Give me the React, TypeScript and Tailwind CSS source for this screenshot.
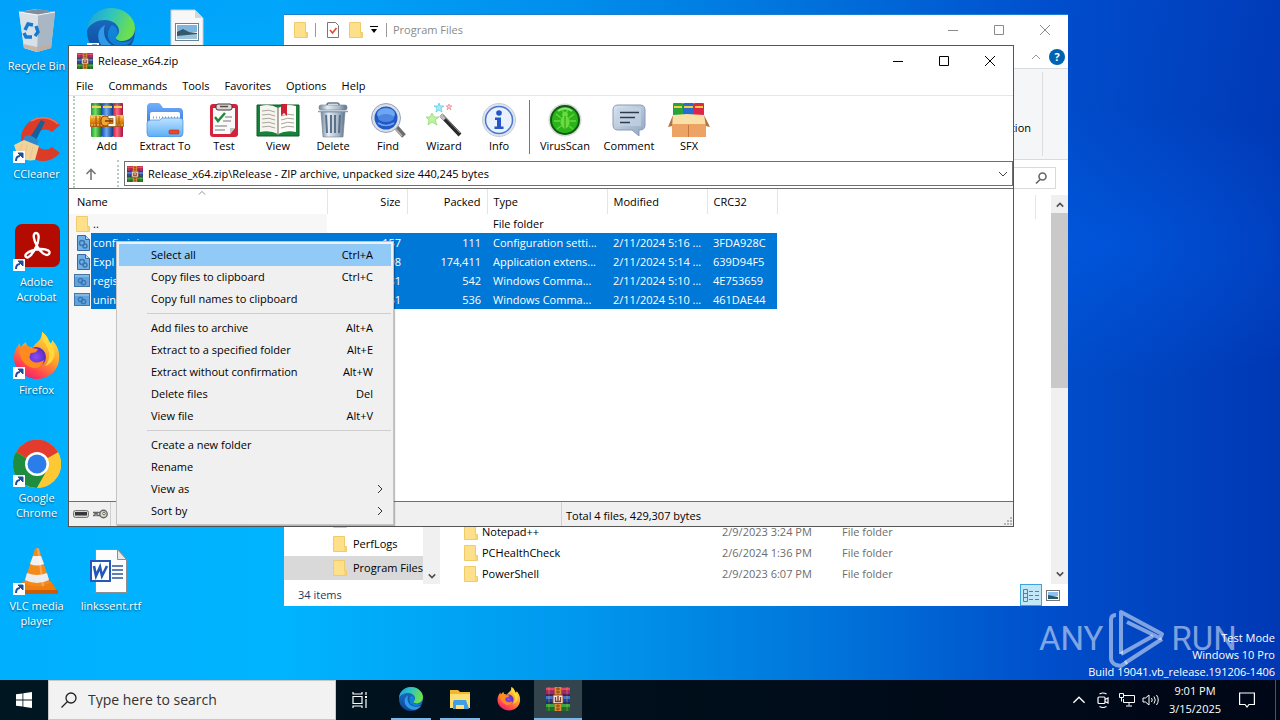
import React from 'react';

type IconProps = { className?: string };

/* ---------- Icons ---------- */

const RarIcon: React.FC<IconProps> = ({ className }) => (
  <svg viewBox="0 0 24 24" className={className} aria-hidden="true">
    <rect x="0" y="0" width="24" height="8" fill="#b5244f" />
    <rect x="0" y="1" width="24" height="2" fill="#e0486f" />
    <rect x="0" y="5" width="24" height="2" fill="#8d2a86" />
    <rect x="0" y="8" width="24" height="8" fill="#1f3f96" />
    <rect x="0" y="9" width="24" height="3" fill="#3f74d6" />
    <rect x="0" y="16" width="24" height="8" fill="#1a6b2c" />
    <rect x="0" y="17" width="24" height="3" fill="#37a744" />
    <path d="M3 0v24M21 0v24" stroke="#e7b23a" strokeWidth="1" opacity=".45" />
    <path d="M0 8h24M0 16h24" stroke="#15192e" strokeWidth="1" />
    <rect x="8.500" y="0" width="7" height="24" fill="#c9701c" />
    <path d="M10 0v24M14 0v24" stroke="#f0ae48" strokeWidth="1" />
    <path d="M10 2h4M10 5h4M10 19h4M10 22h4" stroke="#7e3e0c" />
    <rect x="7" y="8" width="10" height="8.500" rx="1" fill="#f4efe6" stroke="#8a4c22" />
    <path d="M9.500 10v4.500h5V10M12 9v5" fill="none" stroke="#8e3524" strokeWidth="1.400" />
  </svg>
);

const BookStackIcon: React.FC<IconProps> = ({ className }) => (
  <svg viewBox="0 0 34 34" className={className} aria-hidden="true">
    <defs>
      <linearGradient id="bookGreen"><stop offset="0" stopColor="#1f9b2e" /><stop offset=".4" stopColor="#6fe06a" /><stop offset="1" stopColor="#12661f" /></linearGradient>
      <linearGradient id="bookBlue"><stop offset="0" stopColor="#1d55b8" /><stop offset=".4" stopColor="#6cacf5" /><stop offset="1" stopColor="#123a86" /></linearGradient>
      <linearGradient id="bookRed"><stop offset="0" stopColor="#c81c3e" /><stop offset=".4" stopColor="#ff6a86" /><stop offset="1" stopColor="#a3153c" /></linearGradient>
      <linearGradient id="belt" x2="0" y2="1"><stop offset="0" stopColor="#ffc14e" /><stop offset=".5" stopColor="#e58a16" /><stop offset="1" stopColor="#a9560a" /></linearGradient>
    </defs>
    <rect x="1" y="0" width="11" height="34" rx="1" fill="url(#bookGreen)" />
    <rect x="12" y="0" width="11" height="34" rx="1" fill="url(#bookBlue)" />
    <rect x="23" y="0" width="10" height="34" rx="1" fill="url(#bookRed)" />
    <path d="M2 4h9M13 4h9M24 4h8" stroke="#f6d24a" strokeWidth="2" />
    <path d="M1 1h32" stroke="#3b3b54" strokeWidth="1" opacity=".5" />
    <rect x="0" y="12" width="34" height="12" rx="1" fill="url(#belt)" />
    <path d="M1 14h32M1 22h32" stroke="#ffd98a" strokeDasharray="2 1" />
    <path d="M6 13v10M10 13v10M29 13v10" stroke="#9c4e08" />
    <rect x="11" y="13" width="9" height="10" rx="4" fill="#f3a733" stroke="#8d4706" />
    <path d="M18 12.500h8v11h-8v-3h5v-5h-5z" fill="#faf6ec" stroke="#8a5a24" strokeWidth=".8" />
    <path d="M15 18h8" stroke="#7a3a06" strokeWidth="1.500" />
  </svg>
);

const ExtractIcon: React.FC<IconProps> = ({ className }) => (
  <svg viewBox="0 0 38 34" className={className} aria-hidden="true">
    <defs>
      <linearGradient id="exBack" x2="0" y2="1"><stop offset="0" stopColor="#6fb1fb" /><stop offset="1" stopColor="#2a62d8" /></linearGradient>
      <linearGradient id="exFront" x2="0" y2="1"><stop offset="0" stopColor="#bfe2ff" /><stop offset="1" stopColor="#5aaef5" /></linearGradient>
    </defs>
    <path d="M1 4q0-4 4-4h7q2 0 3 2l2 3h16q4 0 4 4v20H1z" fill="url(#exBack)" />
    <rect x="4" y="9" width="30" height="12" rx="2" fill="#fdfdfd" />
    <path d="M7 14.500h25" stroke="#8aa0ba" strokeWidth="2" strokeDasharray="1 2" />
    <path d="M1 20q0-3 4-3h9l2-2h17q4 0 4 3v12q0 4-4 4H5q-4 0-4-4z" fill="url(#exFront)" stroke="#3f8be4" strokeWidth=".7" />
    <rect x="23" y="27" width="10" height="4" rx="1" fill="#e8472c" stroke="#b32f1b" strokeWidth=".6" />
  </svg>
);

const TestIcon: React.FC<IconProps> = ({ className }) => (
  <svg viewBox="0 0 30 34" className={className} aria-hidden="true">
    <rect x="1" y="1" width="28" height="33" rx="3" fill="#d3223a" />
    <path d="M4 5h22v20l-5 6H4z" fill="#fafafa" />
    <path d="M26 25l-5 6v-6z" fill="#c4c4c4" />
    <rect x="7" y="1" width="16" height="6" rx="2" fill="#d9d9d9" stroke="#4a3336" />
    <path d="M11 3.500h8" stroke="#5b4a4a" strokeWidth="1.500" />
    <path d="M6 14l3 4 7-8" fill="none" stroke="#1f8a3a" strokeWidth="2.400" />
    <path d="M16 14h7M14 18h8M6 23h12M6 27h10" stroke="#777" strokeWidth="1.100" />
  </svg>
);

const ViewIcon: React.FC<IconProps> = ({ className }) => (
  <svg viewBox="0 0 44 34" className={className} aria-hidden="true">
    <path d="M1 2h42v31H1z" fill="#17803a" />
    <path d="M1 2h42v31H1z" fill="none" stroke="#0c5a26" />
    <path d="M4 3q10-3 18 2v26q-8-4-18-2z" fill="#f6f4ee" />
    <path d="M40 3q-10-3-18 2v26q8-4 18-2z" fill="#fdfcf8" />
    <path d="M22 5v27" stroke="#8f8c80" strokeWidth="1.400" />
    <path d="M6 8q7-2 13 1M6 12q7-2 13 1M6 16q7-2 13 1M6 20q7-2 13 1M6 24q7-2 13 1M25 13q7-3 13-1M25 17q7-3 13-1M25 21q7-3 13-1M25 25q7-3 13-1" fill="none" stroke="#a7a59c" />
    <path d="M25 1h6v12l-3-3-3 3z" fill="#cf1f33" />
  </svg>
);

const DeleteIcon: React.FC<IconProps> = ({ className }) => (
  <svg viewBox="0 0 32 36" className={className} aria-hidden="true">
    <defs>
      <linearGradient id="steel"><stop offset="0" stopColor="#72869c" /><stop offset=".3" stopColor="#e3ecf4" /><stop offset=".7" stopColor="#a9bacb" /><stop offset="1" stopColor="#5d7187" /></linearGradient>
    </defs>
    <path d="M10 3q0-2 2-2h8q2 0 2 2" fill="none" stroke="#66788c" strokeWidth="1.600" />
    <rect x="2" y="3" width="28" height="5" rx="2" fill="url(#steel)" stroke="#6c7f93" strokeWidth=".6" />
    <path d="M4 10h24l-2 25H6z" fill="url(#steel)" stroke="#6c7f93" strokeWidth=".6" />
    <path d="M9 13l1 18M14 13v18M18 13v18M23 13l-1 18" stroke="#5c7088" strokeWidth="2" />
    <path d="M1 9.500h30" stroke="#8fa3b7" strokeWidth="1.500" />
  </svg>
);

const FindIcon: React.FC<IconProps> = ({ className }) => (
  <svg viewBox="0 0 36 36" className={className} aria-hidden="true">
    <path d="M25 24l9 10" stroke="#6d6d6d" strokeWidth="5" />
    <path d="M24 25l8 9" stroke="#b5b5b5" strokeWidth="1.500" />
    <circle cx="16" cy="16" r="14.500" fill="#d8dfe9" stroke="#97a4b8" />
    <circle cx="16" cy="16" r="11.500" fill="#2259c4" />
    <ellipse cx="16" cy="12" rx="9" ry="6" fill="#6fa6f0" />
    <ellipse cx="16" cy="16" rx="8" ry="4" fill="#4c86e2" />
    <path d="M8 21q8 5 16 0" fill="none" stroke="#6da5f3" strokeWidth="1.500" />
  </svg>
);

const WizardIcon: React.FC<IconProps> = ({ className }) => (
  <svg viewBox="0 0 36 34" className={className} aria-hidden="true">
    <path d="M15 12l19 20" stroke="#2b2b2b" strokeWidth="4" />
    <path d="M15 12l4 4" stroke="#bdbdbd" strokeWidth="4" />
    <path d="M17 12l17 18" stroke="#8a8a8a" strokeWidth="1" />
    <path d="M6 10l2 4 5 0-4 3 2 5-5-3-4 3 1-5-3-3 4 0z" fill="#c0f2a0" stroke="#8fdc70" strokeWidth=".8" />
    <path d="M13 0l1 3 4 0-3 2 1 4-3-2-3 2 1-4-3-2 4 0z" fill="#a5ecf8" stroke="#62cbe6" strokeWidth=".8" />
    <path d="M23 1l1 2 2 0-2 1 1 3-2-2-2 2 1-3-2-1 2 0z" fill="#fbd0d4" stroke="#ee8f9a" strokeWidth=".8" />
  </svg>
);

const InfoIcon: React.FC<IconProps> = ({ className }) => (
  <svg viewBox="0 0 34 34" className={className} aria-hidden="true">
    <circle cx="17" cy="17" r="16.500" fill="#dfe5ee" stroke="#b9c4d4" strokeWidth=".8" />
    <circle cx="17" cy="17" r="13.500" fill="#e9f1fd" stroke="#4a74cf" strokeWidth="1.500" />
    <circle cx="17" cy="10" r="2.800" fill="#2456c6" />
    <path d="M13 14.500h6v9h2.500v2.500h-9v-2.500H15v-6.500h-2z" fill="#2456c6" />
  </svg>
);

const VirusIcon: React.FC<IconProps> = ({ className }) => (
  <svg viewBox="0 0 34 34" className={className} aria-hidden="true">
    <circle cx="17" cy="17" r="16.500" fill="#d5dad5" />
    <circle cx="17" cy="17" r="15" fill="#0b5a10" />
    <circle cx="17" cy="17" r="13" fill="#2bb31c" />
    <path d="M10 8q7-5 14 0" stroke="#8ce87a" strokeWidth="2" fill="none" />
    <ellipse cx="17" cy="19" rx="4.500" ry="6.500" fill="#6bdc40" />
    <circle cx="17" cy="11.500" r="2.800" fill="#6bdc40" />
    <path d="M8 11l5 4M26 11l-5 4M6 18h6M28 18h-6M9 26l4-3M25 26l-4-3M14 7l2 3M20 7l-2 3" stroke="#69d63c" strokeWidth="1.300" />
    <path d="M17 13v12" stroke="#2a9a1a" />
  </svg>
);

const CommentIcon: React.FC<IconProps> = ({ className }) => (
  <svg viewBox="0 0 34 34" className={className} aria-hidden="true">
    <defs>
      <linearGradient id="bubble" x2="1" y2="1"><stop offset="0" stopColor="#dbe5f1" /><stop offset="1" stopColor="#8fa5c0" /></linearGradient>
    </defs>
    <path d="M6 2h22q5 0 5 5v15q0 5-5 5h-1v6l-7-6H6q-5 0-5-5V7q0-5 5-5z" fill="url(#bubble)" stroke="#8a9bb2" />
    <path d="M5 5h24v18H5z" fill="#c4d3e4" opacity=".7" />
    <path d="M8 9.500h19M8 14.500h15M8 19.500h10" stroke="#2e3b4d" strokeWidth="1.600" />
  </svg>
);

const SfxIcon: React.FC<IconProps> = ({ className }) => (
  <svg viewBox="0 0 42 34" className={className} aria-hidden="true">
    <rect x="5" y="0" width="10" height="16" rx="1" fill="#28a33c" />
    <rect x="15" y="0" width="11" height="16" rx="1" fill="#2c6cd0" />
    <rect x="26" y="0" width="10" height="16" rx="1" fill="#dc2747" />
    <path d="M6 4h8M16 4h9M27 4h8" stroke="#f3cf3f" strokeWidth="2" />
    <path d="M4 18h34v16H4z" fill="#eda266" />
    <path d="M20.500 22v12" stroke="#c5773c" />
    <path d="M5 12l14-1 17 1 2 9H4z" fill="#f8e0a6" />
    <path d="M5 12L0 24l4-1zM36 12l6 12-4-1z" fill="#b5713f" />
  </svg>
);

const FolderIcon: React.FC<IconProps> = ({ className }) => (
  <svg viewBox="0 0 14 16" className={className} aria-hidden="true">
    <path d="M1 1h11v10h1v5H1z" fill="#f7d775" />
    <path d="M1 1h10v14H1z" fill="#ffe08a" />
    <path d="M.500 .500h11v10h2v5H.500z" fill="none" stroke="#efcb6c" />
  </svg>
);

const GearFileIcon: React.FC<IconProps> = ({ className }) => (
  <svg viewBox="0 0 14 16" className={className} aria-hidden="true">
    <path d="M1.500 .500h8l4 4v11h-12z" fill="#6fb0e6" stroke="#39699c" />
    <path d="M9.500 .500v4h4" fill="#b4d8f5" stroke="#39699c" />
    <circle cx="6" cy="8" r="2.500" fill="none" stroke="#3b74b0" strokeWidth="1.400" />
    <circle cx="9" cy="11" r="2" fill="none" stroke="#3b74b0" strokeWidth="1.400" />
  </svg>
);

const CmdFileIcon: React.FC<IconProps> = ({ className }) => (
  <svg viewBox="0 0 16 14" className={className} aria-hidden="true">
    <rect x=".5" y=".5" width="15" height="12" fill="#5fa4de" stroke="#4477a5" />
    <path d="M1 2h14" stroke="#8cc0ea" strokeWidth="1.500" />
    <circle cx="6.500" cy="6.500" r="2.200" fill="none" stroke="#3b74b0" strokeWidth="1.300" />
    <circle cx="9.500" cy="8.500" r="2.200" fill="none" stroke="#3b74b0" strokeWidth="1.300" />
  </svg>
);

const RecycleIcon: React.FC<IconProps> = ({ className }) => (
  <svg viewBox="0 0 48 48" className={className} aria-hidden="true">
    <path d="M6 4l17-3 19 3-4 36-14 4-13-4z" fill="#d8e0e8" />
    <path d="M6 4l19 3 17-3-17-3z" fill="#7d8e9e" />
    <path d="M25 7l-1 37 14-4 4-36z" fill="#a9b6c4" />
    <path d="M6 4l5 36 13 4 1-37z" fill="#d9e1e8" />
    <path d="M10 36l14 3 15-3-1 4-14 4-13-4z" fill="#c6ab9b" opacity=".8" />
    <g fill="none" stroke="#1679d3" strokeWidth="3.400">
      <path d="M12 22l3-6 5 1M23 18l2 6-3 4M19 29l-6 0-2-4" />
    </g>
    <path d="M6 4l19 3 17-3" fill="none" stroke="#f4f7fa" />
  </svg>
);

const EdgeIcon: React.FC<IconProps> = ({ className }) => (
  <svg viewBox="0 0 48 48" className={className} aria-hidden="true">
    <defs>
      <linearGradient id="edgeTop" x2="1" y2=".3"><stop offset="0" stopColor="#1b9de2" /><stop offset=".5" stopColor="#2fc3c0" /><stop offset="1" stopColor="#6be04f" /></linearGradient>
      <linearGradient id="edgeBody" x2="0" y2="1"><stop offset="0" stopColor="#1c73c9" /><stop offset="1" stopColor="#0d4797" /></linearGradient>
    </defs>
    <circle cx="24" cy="24" r="24" fill="url(#edgeBody)" />
    <path d="M0 22C1 8 12 0 24 0c14 0 24 10 24 20 0 8-6 13-13 13-4 0-7-2-6-4 2-2 3-4 3-6 0-6-6-11-14-11C9 12 2 17 0 22z" fill="url(#edgeTop)" />
    <path d="M18 17c-7 3-9 12-4 20 4 6 12 10 20 8 4-1 8-4 10-8-8 4-18 3-23-3-4-4-5-11-3-17z" fill="#2d9be9" />
    <path d="M25 17c5 2 7 7 5 11-3 3 0 6 6 6 4 0 8-1 10-4-2 6-8 9-14 8-8-1-12-7-11-13 0-3 2-6 4-8z" fill="#0e9ef5" opacity=".6" />
  </svg>
);

const PictureFileIcon: React.FC<IconProps> = ({ className }) => (
  <svg viewBox="0 0 48 48" className={className} aria-hidden="true">
    <path d="M8 2h24l8 8v38H8z" fill="#f7f7f7" stroke="#c9ced3" />
    <path d="M32 2v8h8z" fill="#cfd6dc" />
    <rect x="12.500" y="15.500" width="23" height="17" fill="#fff" stroke="#6b8296" />
    <rect x="14" y="17" width="20" height="7" fill="#7fb4df" />
    <path d="M14 24l6-3 6 3 8 1v6H14z" fill="#35596b" />
    <path d="M14 28l20-2v5H14z" fill="#9cc4dc" />
  </svg>
);

const CCleanerIcon: React.FC<IconProps> = ({ className }) => (
  <svg viewBox="0 0 48 48" className={className} aria-hidden="true">
    <path d="M47 9A22 22 0 1 0 47 37L39 31A10 10 0 1 1 39 16z" fill="#dc3b27" />
    <path d="M45 8Q33-3 18 5" fill="none" stroke="#f0705a" strokeWidth="1.500" />
    <path d="M28 4l4 2-10 20-6-3z" fill="#155f9b" />
    <path d="M12 20q5-3 14 5l-3 6-14-5z" fill="#2a8acb" />
    <path d="M1 29l10-5 15 6-4 14q-12 2-18-6z" fill="#f2d29b" />
    <path d="M9 28l-2 8M14 29l-2 12M20 31l-3 12" stroke="#e6c68c" />
  </svg>
);

const AcrobatIcon: React.FC<IconProps> = ({ className }) => (
  <svg viewBox="0 0 48 48" className={className} aria-hidden="true">
    <rect x="2" y="0" width="45" height="43" rx="7" fill="#b30b00" />
    <path d="M23 9c4 0 3 8 0 14-3 7-8 12-10 10-3-3 6-8 15-8 6 0 10 2 8 5-3 3-9-2-12-8-3-5-5-13-1-13z" fill="none" stroke="#fff" strokeWidth="2.400" />
  </svg>
);

const FirefoxIcon: React.FC<IconProps> = ({ className }) => (
  <svg viewBox="0 0 48 48" className={className} aria-hidden="true">
    <defs>
      <linearGradient id="ffBody" x1=".8" y1="0" x2=".2" y2="1"><stop offset="0" stopColor="#ffe83f" /><stop offset=".45" stopColor="#ff9a2c" /><stop offset=".8" stopColor="#ff3d55" /><stop offset="1" stopColor="#e31587" /></linearGradient>
      <radialGradient id="ffCore"><stop offset="0" stopColor="#8a4bff" /><stop offset="1" stopColor="#5a2bb8" /></radialGradient>
    </defs>
    <path d="M29 0c5 4 7 8 8 12 2-1 2-3 2-4 5 5 8 11 7 20-1 11-11 19-22 19S1 38 1 26c0-7 3-12 6-15 0 2 0 3 1 4 1-2 3-4 5-5 0 2 1 4 3 5h4c3-5 9-6 9-15z" fill="url(#ffBody)" />
    <circle cx="23" cy="25" r="10" fill="url(#ffCore)" />
    <path d="M6 16c5-3 10-2 13 0l6 1c-1 3-4 4-7 4-2 3-2 6 1 8 4 3 9 1 12-1-1 7-8 10-14 7-7-3-11-10-11-19z" fill="#ff8a1f" />
    <path d="M29 0c-1 8 5 12 7 20 1 6-1 11-4 14 8-3 11-10 9-17-2-6-5-6-6-10-1-3-3-5-6-7z" fill="#ffd93b" />
  </svg>
);

const ChromeIcon: React.FC<IconProps> = ({ className }) => (
  <svg viewBox="0 0 48 48" className={className} aria-hidden="true">
    <circle cx="24" cy="24" r="24" fill="#fcc934" />
    <path d="M24 24L3 12A24 24 0 0 1 45 12z" fill="#e33b2e" />
    <path d="M45 12H24v12z" fill="#e33b2e" />
    <path d="M3 12a24 24 0 0 0 21 36l10-18-10-6z" fill="#1e8e3e" />
    <path d="M24 48l10.500-18L45 12a24 24 0 0 1-21 36z" fill="#fcc934" />
    <circle cx="24" cy="24" r="12" fill="#fff" />
    <circle cx="24" cy="24" r="9.500" fill="#2b7de9" />
  </svg>
);

const VlcIcon: React.FC<IconProps> = ({ className }) => (
  <svg viewBox="0 0 48 48" className={className} aria-hidden="true">
    <path d="M10 33h28l6 10H4z" fill="#f07d10" />
    <path d="M4 42h41v4H4z" fill="#c95c05" />
    <path d="M22 1q2-2 4 0l11 34q-13 7-26 0z" fill="#f58a1c" />
    <path d="M20 8h8l3 8q-7 3-14 0z" fill="#f1f1f1" />
    <path d="M14 25q10 4 20 0l2 7q-12 6-24 0z" fill="#ececec" />
    <path d="M25 0l5 38" stroke="#fff" strokeWidth="2" opacity=".25" />
  </svg>
);

const WordFileIcon: React.FC<IconProps> = ({ className }) => (
  <svg viewBox="0 0 48 48" className={className} aria-hidden="true">
    <path d="M8.500 1.500h22l9 10v33h-31z" fill="#fcfcfc" stroke="#8a8f94" />
    <path d="M30.500 1.500v10h9z" fill="#e9e9e9" stroke="#8a8f94" />
    <path d="M25 18h11M25 22h11M25 26h11M25 30h11" stroke="#2b579a" strokeWidth="1.400" />
    <rect x="3" y="12" width="21" height="22" fill="#2458b8" />
    <rect x="5" y="14" width="17" height="18" fill="#fff" />
    <path d="M7 18l2 10 4-9 2 9 5-10" fill="none" stroke="#2458b8" strokeWidth="2.600" />
  </svg>
);

const ExplorerIcon: React.FC<IconProps> = ({ className }) => (
  <svg viewBox="0 0 24 24" className={className} aria-hidden="true">
    <path d="M2 3h8l2 2h10v16H2z" fill="#f3b72f" />
    <path d="M2 7h20v14H2z" fill="#ffdf74" />
    <path d="M6 13h12l3 9h-5v-4H8v4H5v-7z" fill="#3f9fe4" />
    <path d="M8 18h8v4H8z" fill="#ffdf74" />
  </svg>
);

const ShortcutBadge = () => (
  <svg viewBox="0 0 12 12" className="absolute bottom-px left-0 h-3 w-3" aria-hidden="true">
    <rect width="12" height="12" fill="#fff" />
    <path d="M3 10q0-5 4-5" fill="none" stroke="#1d4f9c" strokeWidth="2" />
    <path d="M5 2h5v5z" fill="#1d4f9c" stroke="#1d4f9c" />
  </svg>
);

const Chevron: React.FC<{ path: string; className?: string }> = ({ path, className }) => (
  <svg viewBox="0 0 10 10" className={className} fill="none" stroke="currentColor" aria-hidden="true">
    <path d={path} />
  </svg>
);

const UP = 'M1 7l4-4 4 4';
const DOWN = 'M1 3l4 4 4-4';
const RIGHT = 'M3 1l4 4-4 4';

/* ---------- Data ---------- */

const desktopItems = [
  { label: 'Recycle Bin', icon: <RecycleIcon className="h-12 w-12" />, place: 'col-start-1 row-start-1', shortcut: false },
  { label: 'CCleaner', icon: <CCleanerIcon className="h-12 w-12" />, place: 'col-start-1 row-start-2', shortcut: true },
  { label: 'Adobe Acrobat', icon: <AcrobatIcon className="h-12 w-12" />, place: 'col-start-1 row-start-3', shortcut: true },
  { label: 'Firefox', icon: <FirefoxIcon className="h-12 w-12" />, place: 'col-start-1 row-start-4', shortcut: true },
  { label: 'Google Chrome', icon: <ChromeIcon className="h-12 w-12" />, place: 'col-start-1 row-start-5', shortcut: true },
  { label: 'VLC media player', icon: <VlcIcon className="h-12 w-12" />, place: 'col-start-1 row-start-6', shortcut: true },
  { label: '', icon: <EdgeIcon className="h-12 w-12" />, place: 'col-start-2 row-start-1', shortcut: true },
  { label: 'linkssent.rtf', icon: <WordFileIcon className="h-12 w-12" />, place: 'col-start-2 row-start-6', shortcut: false },
  { label: '', icon: <PictureFileIcon className="h-12 w-12" />, place: 'col-start-3 row-start-1', shortcut: false },
];

const toolbar = [
  { label: 'Add', width: 'w-[54px]', icon: <BookStackIcon className="h-[34px] w-[34px]" /> },
  { label: 'Extract To', width: 'w-[62px]', icon: <ExtractIcon className="h-[34px] w-[38px]" /> },
  { label: 'Test', width: 'w-[56px]', icon: <TestIcon className="h-[34px] w-[30px]" /> },
  { label: 'View', width: 'w-[52px]', icon: <ViewIcon className="h-[34px] w-[44px]" /> },
  { label: 'Delete', width: 'w-[58px]', icon: <DeleteIcon className="h-9 w-8" /> },
  { label: 'Find', width: 'w-[52px]', icon: <FindIcon className="h-9 w-9" /> },
  { label: 'Wizard', width: 'w-[60px]', icon: <WizardIcon className="h-[34px] w-9" /> },
  { label: 'Info', width: 'w-[50px]', icon: <InfoIcon className="h-[34px] w-[34px]" /> },
];

const toolbarExtra = [
  { label: 'VirusScan', width: 'w-[60px]', icon: <VirusIcon className="h-[34px] w-[34px]" /> },
  { label: 'Comment', width: 'w-[68px]', icon: <CommentIcon className="h-[34px] w-[34px]" /> },
  { label: 'SFX', width: 'w-[52px]', icon: <SfxIcon className="h-[34px] w-[42px]" /> },
];

const archiveRows = [
  { name: 'config.ini', size: '157', packed: '111', type: 'Configuration setti...', modified: '2/11/2024 5:16 ...', crc: '3FDA928C', cmd: false },
  { name: 'Expl', size: '98', packed: '174,411', type: 'Application extens...', modified: '2/11/2024 5:14 ...', crc: '639D94F5', cmd: false },
  { name: 'regis', size: '81', packed: '542', type: 'Windows Comma...', modified: '2/11/2024 5:10 ...', crc: '4E753659', cmd: true },
  { name: 'unin', size: '61', packed: '536', type: 'Windows Comma...', modified: '2/11/2024 5:10 ...', crc: '461DAE44', cmd: true },
];

const menuGroups = [
  [
    { label: 'Select all', keys: 'Ctrl+A', active: true },
    { label: 'Copy files to clipboard', keys: 'Ctrl+C' },
    { label: 'Copy full names to clipboard' },
  ],
  [
    { label: 'Add files to archive', keys: 'Alt+A' },
    { label: 'Extract to a specified folder', keys: 'Alt+E' },
    { label: 'Extract without confirmation', keys: 'Alt+W' },
    { label: 'Delete files', keys: 'Del' },
    { label: 'View file', keys: 'Alt+V' },
  ],
  [
    { label: 'Create a new folder' },
    { label: 'Rename' },
    { label: 'View as', submenu: true },
    { label: 'Sort by', submenu: true },
  ],
] as { label: string; keys?: string; active?: boolean; submenu?: boolean }[][];

const folders = [
  { name: 'Notepad++', date: '2/9/2023 3:24 PM' },
  { name: 'PCHealthCheck', date: '2/6/2024 1:36 PM' },
  { name: 'PowerShell', date: '2/9/2023 6:07 PM' },
];

/* ---------- Pieces ---------- */

const WindowButtons: React.FC<{ className?: string }> = ({ className }) => (
  <div className={`ml-auto flex self-stretch ${className ?? ''}`}>
    {[
      { label: 'Minimize', d: 'M0 5.500h10' },
      { label: 'Maximize', d: 'M.5 .5h9v9h-9z' },
      { label: 'Close', d: 'M0 0l10 10M10 0L0 10' },
    ].map(b => (
      <button key={b.label} aria-label={b.label} className="flex w-[46px] items-center justify-center">
        <svg viewBox="0 0 10 10" className="h-2.5 w-2.5" fill="none" stroke="currentColor">
          <path d={b.d} />
        </svg>
      </button>
    ))}
  </div>
);

const ToolButton: React.FC<{ label: string; width: string; icon: React.ReactNode }> = ({ label, width, icon }) => (
  <button className={`flex flex-col items-center pt-0.5 ${width}`}>
    <span className="flex h-9 items-center">{icon}</span>
    <span className="leading-4 whitespace-nowrap">{label}</span>
  </button>
);

const DesktopIcons = () => (
  <div className="grid w-[225px] grid-cols-[73px_76px_76px] grid-rows-[repeat(6,108px)]">
    {desktopItems.map((item, i) => (
      <a key={i} href="#" aria-label={item.label || 'Desktop item'} className={`flex flex-col items-center pt-2 ${item.place}`}>
        <span className="relative block h-12 w-12">
          {item.icon}
          {item.shortcut && <ShortcutBadge />}
        </span>
        <span className="mt-0.5 max-w-[72px] text-center leading-[15px] text-white [text-shadow:0_1px_2px_rgba(0,0,0,0.6)]">
          {item.label}
        </span>
      </a>
    ))}
  </div>
);

const ExplorerWindow = () => (
  <section className="absolute top-[14px] left-[284px] flex h-[592px] w-[784px] flex-col overflow-hidden border-t border-[#1a7fd0] bg-white">
    <header className="flex h-[30px] shrink-0 items-center pl-2.5 text-[#8a8a8a]">
      <FolderIcon className="h-4 w-3.5" />
      <span className="ml-[7px] h-3.5 w-px bg-[#9a9a9a]" />
      <svg viewBox="0 0 12 16" className="ml-[11px] h-4 w-3">
        <path d="M.5 .5h8l3 3v12H.5z" fill="#fff" stroke="#777" />
        <path d="M3 8l2.500 3 4-5" fill="none" stroke="#e0492f" strokeWidth="1.600" />
      </svg>
      <FolderIcon className="ml-2.5 h-4 w-3.5" />
      <svg viewBox="0 0 8 8" className="ml-[7px] h-2 w-2">
        <path d="M0 .500h8" stroke="#000" />
        <path d="M1 3h6L4 7z" />
      </svg>
      <span className="ml-2 h-3.5 w-px bg-[#9a9a9a]" />
      <h2 className="ml-1.5">Program Files</h2>
      <WindowButtons />
    </header>

    <div className="flex h-[23px] shrink-0 items-center justify-end gap-2 pr-[3px]">
      <Chevron path={UP} className="h-2.5 w-2.5 text-[#999]" />
      <button aria-label="Help" className="flex h-4 w-4 items-center justify-center rounded-full bg-[#0063b1] font-bold text-white">?</button>
    </div>

    {/* Ribbon */}
    <div className="flex h-[92px] shrink-0 justify-end border-y border-[#dadbdc] bg-[#f5f6f7] py-[3px] pr-[25px]">
      <div className="flex items-center border-r border-[#dcdddf] pt-7 pr-[11px] leading-4">
        <span>tion</span>
      </div>
    </div>

    <div className="flex h-[35px] shrink-0 items-center justify-end pr-3">
      <label className="flex h-[22px] w-[200px] items-center border border-[#d9d9d9] pr-2">
        <input aria-label="Search Program Files" className="min-w-0 flex-1 outline-none" />
        <svg viewBox="0 0 12 12" className="h-3 w-3" fill="none" stroke="#666" strokeWidth="1.600">
          <circle cx="7.500" cy="4.500" r="3.500" />
          <path d="M5 7.500L1 11.500" />
        </svg>
      </label>
    </div>

    <div className="flex min-h-0 flex-1">
      <nav className="flex w-[139px] flex-col justify-end overflow-hidden pb-1">
        <div className="flex h-6 shrink-0 items-center pl-[49px]"><FolderIcon className="h-4 w-3.5" /></div>
        <a href="#" className="flex h-6 shrink-0 items-center gap-1.5 pl-[49px]">
          <FolderIcon className="h-4 w-3.5 shrink-0" /> PerfLogs
        </a>
        <a href="#" className="flex h-6 shrink-0 items-center gap-1.5 bg-[#d9d9d9] pl-[49px] whitespace-nowrap">
          <FolderIcon className="h-4 w-3.5 shrink-0" /> Program Files
        </a>
      </nav>
      <div className="flex w-[17px] items-end justify-center bg-[#f0f0f0] pb-1">
        <Chevron path={DOWN} className="h-2 w-2 stroke-2 text-[#505050]" />
      </div>
      <div className="flex min-w-0 flex-1 flex-col">
        <div className="h-6 w-[596px] border-r border-[#e5e5e5]" />
        <table className="mt-auto w-full table-fixed border-collapse">
          <tbody>
            {folders.map(f => (
              <tr key={f.name} className="h-[21px]">
                <td className="w-[282px] p-0 pl-6">
                  <span className="flex items-center gap-1"><FolderIcon className="h-4 w-3.5" />{f.name}</span>
                </td>
                <td className="w-[120px] p-0 text-[#6d6d6d]">{f.date}</td>
                <td className="p-0 text-[#6d6d6d]">File folder</td>
              </tr>
            ))}
          </tbody>
        </table>
      </div>
      <div className="flex w-[17px] flex-col items-center bg-[#f0f0f0]">
        <Chevron path={UP} className="mt-1.5 mb-1 h-2 w-2 stroke-2 text-[#505050]" />
        <div className="h-[175px] w-full bg-[#c9c9c9]" />
        <Chevron path={DOWN} className="mt-auto mb-1.5 h-2 w-2 stroke-2 text-[#505050]" />
      </div>
    </div>

    <footer className="flex h-[22px] shrink-0 items-center pl-3.5 text-[#1e395b]">
      <span>34 items</span>
      <button aria-label="Details view" className="ml-auto flex h-full w-[22px] items-center justify-center border border-[#3ca5dc] bg-[#c4e7f8]">
        <svg viewBox="0 0 16 13" className="h-[13px] w-4" fill="none" stroke="#777">
          <path d="M.5 .5h4v12h-4zM.5 4.500h4M.5 8.500h4M6 2.500h4M12 2.500h4M6 6.500h4M12 6.500h4M6 10.500h4M12 10.500h4" />
        </svg>
      </button>
      <button aria-label="Thumbnail view" className="flex w-[26px] justify-center pr-1">
        <svg viewBox="0 0 14 11" className="h-[11px] w-3.5">
          <rect x=".5" y=".5" width="13" height="10" fill="#fff" stroke="#777" />
          <path d="M2 2h10v4H2z" fill="#8cc3ee" />
          <path d="M2 5l10 2v2H2z" fill="#245a70" />
        </svg>
      </button>
    </footer>
  </section>
);

const ArchiveTable = () => (
  <div className="min-h-0 flex-1 overflow-hidden border-y border-[#707070] bg-[linear-gradient(to_right,#f7f7f7_258px,#fff_258px)]">
    <div className="bg-white">
      <table className="w-[708px] table-fixed border-collapse">
        <thead>
          <tr className="h-[25px]">
            <th className="relative w-[258px] border-r border-[#e5e5e5] p-0 pl-2 text-left font-normal">
              Name
              <Chevron path={UP} className="absolute top-0 left-1/2 h-2 w-2 text-[#777]" />
            </th>
            <th className="w-[80px] border-r border-[#e5e5e5] p-0 pr-1.5 text-right font-normal">Size</th>
            <th className="w-[80px] border-r border-[#e5e5e5] p-0 pr-1.5 text-right font-normal">Packed</th>
            <th className="w-[120px] border-r border-[#e5e5e5] p-0 pl-1.5 text-left font-normal">Type</th>
            <th className="w-[100px] border-r border-[#e5e5e5] p-0 pl-1.5 text-left font-normal">Modified</th>
            <th className="w-[70px] border-r border-[#e5e5e5] p-0 pl-1.5 text-left font-normal">CRC32</th>
          </tr>
        </thead>
        <tbody>
          <tr className="h-[19px]">
            <td className="bg-[#f7f7f7] p-0 pl-[7px]">
              <span className="flex items-center gap-[3px]"><FolderIcon className="h-4 w-3.5" />..</span>
            </td>
            <td />
            <td />
            <td className="p-0 pl-1.5">File folder</td>
            <td />
            <td />
          </tr>
          {archiveRows.map(r => (
            <tr key={r.name} className="h-[19px] text-white">
              <td className="bg-[#f7f7f7] p-0">
                <div className="flex h-[19px] items-center">
                  <span className="flex w-[22px] shrink-0 justify-end pr-px">
                    {r.cmd ? <CmdFileIcon className="h-3.5 w-4" /> : <GearFileIcon className="h-4 w-3.5" />}
                  </span>
                  <span className="flex h-full flex-1 items-center bg-[#0078d7] pl-0.5">{r.name}</span>
                </div>
              </td>
              <td className="bg-[#0078d7] p-0 pr-1.5 text-right">{r.size}</td>
              <td className="bg-[#0078d7] p-0 pr-1.5 text-right">{r.packed}</td>
              <td className="bg-[#0078d7] p-0 pl-1.5 whitespace-nowrap">{r.type}</td>
              <td className="bg-[#0078d7] p-0 pl-1.5 whitespace-nowrap">{r.modified}</td>
              <td className="bg-[#0078d7] p-0 pl-1.5">{r.crc}</td>
            </tr>
          ))}
        </tbody>
      </table>
    </div>
  </div>
);

const ArchiveWindow = () => (
  <section className="absolute top-[45px] left-[68px] flex h-[482px] w-[946px] flex-col border border-[#555] bg-white">
    <header className="flex h-[29px] shrink-0 items-center pl-2">
      <RarIcon className="h-4 w-4" />
      <h1 className="ml-[5px]">Release_x64.zip</h1>
      <WindowButtons className="text-black" />
    </header>

    <nav className="flex h-[21px] shrink-0 items-center gap-[15px] border-b border-[#e6e6e6] pt-px pl-[7px]">
      {['File', 'Commands', 'Tools', 'Favorites', 'Options', 'Help'].map(m => (
        <button key={m}>{m}</button>
      ))}
    </nav>

    <div className="flex h-[92px] shrink-0 flex-col pl-1">
      <div className="flex min-h-0 flex-1 flex-col border-l-2 border-dotted border-[#b5cdbd]">
        <div className="flex h-16 items-start pt-1 pl-[5px]">
          {toolbar.map(t => <ToolButton key={t.label} {...t} />)}
          <span className="mr-[5px] ml-[5px] h-[54px] w-px bg-[#777]" />
          {toolbarExtra.map(t => <ToolButton key={t.label} {...t} />)}
        </div>
        <div className="flex h-[27px] items-center">
          <button aria-label="Up one level" className="flex h-full w-[44px] items-center border-r-2 border-dotted border-[#b5cdbd] pl-2.5">
            <svg viewBox="0 0 12 12" className="h-3 w-3" fill="none" stroke="#777" strokeWidth="1.600">
              <path d="M6 12V1.500M1.500 6L6 1.500 10.500 6" />
            </svg>
          </button>
          <label className="ml-[5px] flex h-[25px] flex-1 items-center border border-[#707070] pr-1 pl-0.5">
            <RarIcon className="h-4 w-4" />
            <select aria-label="Archive path" className="h-full flex-1 appearance-none bg-white pl-[5px] outline-none">
              <option>Release_x64.zip\Release - ZIP archive, unpacked size 440,245 bytes</option>
            </select>
            <Chevron path={DOWN} className="h-2.5 w-2.5 text-[#444]" />
          </label>
        </div>
      </div>
    </div>

    <ArchiveTable />

    <footer className="flex h-6 shrink-0 items-center bg-[#f0f0f0] pl-1">
      <svg viewBox="0 0 16 8" className="h-2 w-4">
        <rect x=".5" y=".5" width="15" height="7" rx="2" fill="#d4d4cc" stroke="#77776f" />
        <rect x="2" y="2" width="12" height="3.500" fill="#34383c" />
      </svg>
      <svg viewBox="0 0 16 10" className="ml-[3px] h-2.5 w-4" fill="none" stroke="#66665f">
        <path d="M1 3.500h8M1 6.500h2v-2h2v2h4" strokeWidth="1.400" />
        <circle cx="11.500" cy="5" r="3.700" fill="#dcdcd4" strokeWidth="1.400" />
        <circle cx="12" cy="4.500" r="1.300" fill="#fff" />
      </svg>
      <span className="ml-0.5 h-full w-px bg-[#d0d0d0]" />
      <span className="ml-[450px] h-full w-px bg-[#d0d0d0]" />
      <span className="ml-1 pt-1">Total 4 files, 429,307 bytes</span>
      <svg viewBox="0 0 9 9" className="ml-auto h-[9px] w-[9px] self-end" fill="#b4b4b4">
        <path d="M6 0h2v2H6zM6 3h2v2H6zM6 6h2v2H6zM3 3h2v2H3zM3 6h2v2H3zM0 6h2v2H0z" />
      </svg>
    </footer>
  </section>
);

const ContextMenu = () => (
  <div role="menu" className="absolute top-[241px] left-[116px] w-[278px] border border-[#c4c4c4] bg-[#f0f0f0] p-0.5 shadow-[1px_1px_1px_rgba(0,0,0,0.25)]">
    {menuGroups.map((group, i) => (
      <React.Fragment key={i}>
        {i > 0 && <div className="my-[3px] ml-7 h-px bg-[#cfcfcf]" />}
        {group.map(item => (
          <button
            key={item.label}
            role="menuitem"
            className={`flex h-[22px] w-full items-center justify-between pl-8 ${item.submenu ? 'pr-1.5' : 'pr-[18px]'} ${item.active ? 'bg-[#91c9f7]' : ''}`}
          >
            <span>{item.label}</span>
            {item.keys && <span>{item.keys}</span>}
            {item.submenu && <Chevron path={RIGHT} className="h-2.5 w-2.5 text-[#333]" />}
          </button>
        ))}
      </React.Fragment>
    ))}
  </div>
);

const Watermark = () => (
  <div className="absolute right-[5px] bottom-0 h-[74px] w-[236px]">
    <div className="flex h-16 items-center gap-1.5 font-['Roboto',sans-serif] text-[33px] leading-none text-white/50">
      <span>ANY</span>
      <svg viewBox="0 0 56 60" className="h-[60px] w-14" fill="none" stroke="currentColor" strokeWidth="4">
        <path d="M7 7q-5 0-5 5v38q0 5 5 7l5 1 6-4" />
        <path d="M12 46V4l41 22-2 4-33-16" strokeLinejoin="round" />
        <path d="M12 46l32-18M16 55l37-24" />
      </svg>
      <span>RUN</span>
    </div>
    <div className="absolute right-0 bottom-0 text-right leading-[17px] whitespace-nowrap text-white">
      <p>Test Mode</p>
      <p>Windows 10 Pro</p>
      <p>Build 19041.vb_release.191206-1406</p>
    </div>
  </div>
);

const Taskbar = () => (
  <footer className="flex h-10 shrink-0 items-stretch bg-[linear-gradient(to_right,#001722,#000d1a_60%,#000716)] text-white">
    <button aria-label="Start" className="flex w-12 items-center justify-center">
      <svg viewBox="0 0 16 16" className="h-4 w-4" fill="#fff">
        <path d="M0 2.300L6.500 1.400V7.600H0zM7.300 1.300L16 0v7.600H7.300zM0 8.400h6.500v6.200L0 13.700zM7.300 8.400H16V16l-8.700-1.300z" />
      </svg>
    </button>
    <label className="flex w-[288px] items-center border border-[#c8c8c8] bg-[#f2f2f2] pl-3">
      <svg viewBox="0 0 16 16" className="h-4 w-4 shrink-0" fill="none" stroke="#222" strokeWidth="1.300">
        <circle cx="10" cy="6" r="5" />
        <path d="M6.500 9.500L.5 15.500" />
      </svg>
      <input
        aria-label="Search"
        placeholder="Type here to search"
        className="ml-[11px] min-w-0 flex-1 bg-transparent text-[14px] outline-none placeholder:text-[#333]"
      />
    </label>
    <button aria-label="Task view" className="mr-[3px] flex w-12 items-center justify-center">
      <svg viewBox="0 0 16 16" className="h-4 w-4" fill="none" stroke="#fff" strokeWidth="1.200">
        <path d="M1 0v2h9V0M1 4.500h9v7H1zM1 16v-2h9v2M14 0v3M14 7v9" />
        <path d="M13 4h2v2h-2z" fill="#fff" stroke="none" />
      </svg>
    </button>
    <div className="flex gap-px">
      <button aria-label="Microsoft Edge" className="flex w-12 flex-col items-center">
        <span className="flex flex-1 items-center"><EdgeIcon className="h-6 w-6" /></span>
        <span className="h-0.5 w-10 bg-[#76b9ed]" />
      </button>
      <button aria-label="File Explorer" className="flex w-12 flex-col items-center">
        <span className="flex flex-1 items-center"><ExplorerIcon className="h-6 w-6" /></span>
        <span className="h-0.5 w-10 bg-[#76b9ed]" />
      </button>
      <button aria-label="Firefox" className="flex w-12 flex-col items-center">
        <span className="flex flex-1 items-center pb-0.5"><FirefoxIcon className="h-6 w-6" /></span>
      </button>
      <button aria-label="WinRAR" className="flex w-12 flex-col items-center bg-[#33444d]">
        <span className="flex flex-1 items-center"><RarIcon className="h-6 w-6" /></span>
        <span className="h-0.5 w-full bg-[#76b9ed]" />
      </button>
    </div>

    <div className="ml-auto flex items-center">
      <button aria-label="Show hidden icons" className="flex w-6 justify-center">
        <Chevron path={UP} className="h-3.5 w-3.5" />
      </button>
      <button aria-label="Meet now" className="flex w-6 justify-center">
        <svg viewBox="0 0 16 16" className="h-4 w-4" fill="none" stroke="#fff" strokeWidth="1.200">
          <rect x="3" y="5" width="7" height="6.500" rx="1" />
          <path d="M10 7.500l3-1.500v5l-3-1.500M4.500 2q3.500-2 7 0M4.500 14.500q3.500 2 7 0" />
        </svg>
      </button>
      <button aria-label="Network" className="flex w-6 justify-center">
        <svg viewBox="0 0 16 14" className="h-3.5 w-4" fill="none" stroke="#fff">
          <path d="M5 2.500h10.500v7H4.500V6M10 9.500v3M7 13h6M.5 .5h4v4h-4zM2.500 4.500v4" />
        </svg>
      </button>
      <button aria-label="Volume" className="flex w-6 justify-center">
        <svg viewBox="0 0 18 14" className="h-3.5 w-[18px]" fill="none" stroke="#fff">
          <path d="M1 5h2.500L7 2v10L3.500 9H1zM9.500 5q1.500 2 0 4M12 3.500q2.500 3.500 0 7M14.500 2q3.500 5 0 10" />
        </svg>
      </button>
      <div className="w-16 text-center leading-[18px] whitespace-nowrap">
        <p>9:01 PM</p>
        <p>3/15/2025</p>
      </div>
      <button aria-label="Notifications" className="flex w-10 justify-center">
        <svg viewBox="0 0 16 16" className="h-4 w-4" fill="none" stroke="#fff" strokeWidth="1.200">
          <path d="M.6 1h14.800v11.500H10L8 15l-2-2.500H.6z" />
        </svg>
      </button>
      <button aria-label="Show desktop" className="ml-2 h-full w-[5px] border-l border-[#4a5560]" />
    </div>
  </footer>
);

export default function App() {
  return (
    <div className="flex h-screen flex-col overflow-hidden font-['Open_Sans','Noto_Sans',sans-serif] text-[11px] leading-4 text-black">
      <main className="relative min-h-0 flex-1 overflow-hidden bg-[linear-gradient(to_bottom,rgba(0,80,220,0.15),transparent_30%),radial-gradient(ellipse_at_86%_36%,rgba(0,100,245,0.4),transparent_22%),linear-gradient(to_right,#00b0ff_0%,#00b4ff_22%,#0098ee_45%,#0074da_65%,#004ecb_82%,#0038b4_100%)]">
        <DesktopIcons />
        <Watermark />
        <ExplorerWindow />
        <ArchiveWindow />
        <ContextMenu />
      </main>
      <Taskbar />
    </div>
  );
}
